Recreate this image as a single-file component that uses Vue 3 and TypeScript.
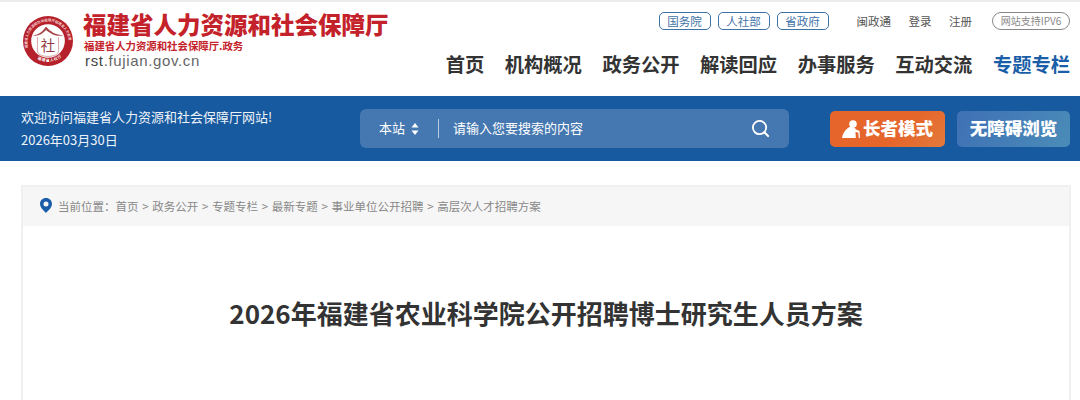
<template>
  <div class="page">
    <header class="head">
      <div class="brand">
        <svg class="logo" viewBox="0 0 52 52" xmlns="http://www.w3.org/2000/svg">
          <defs>
            <path id="ring" d="M 6 35 A 21.5 21.5 0 1 1 46 35" />
            <path id="ringb" d="M 12.5 43 A 22 22 0 0 0 39.5 43" />
          </defs>
          <circle cx="26" cy="26" r="26" fill="#b5202a" />
          <circle cx="26" cy="26" r="17.5" fill="#fff" />
          <text class="ring-text"><textPath href="#ring" startOffset="2">福建省人力资源和社会保障厅福建省人力资源</textPath></text>
          <text class="ring-bottom"><textPath href="#ringb" startOffset="3">福建省人社厅</textPath></text>
          <path d="M10 20 C15 20 19 18 24 11 C28 16 34 20 42 20 C36 22 29 19 24 14.5 C20 19 15 21.5 10 20 Z" fill="#a8454a" />
          <path d="M15 22 V36 C15 40 20 42 26 42 C32 42 37 40 37 36 V22" fill="none" stroke="#c77c7e" stroke-width="0.7" />
          <text class="logo-mark" x="26" y="36" text-anchor="middle">社</text>
        </svg>
        <div class="brand-text">
          <div class="brand-title">福建省人力资源和社会保障厅</div>
          <div class="brand-sub">福建省人力资源和社会保障厅.政务</div>
          <div class="brand-url"><b>rst</b>.fujian.gov.cn</div>
        </div>
      </div>
      <div class="head-right">
        <div class="tools">
          <a v-for="t in govLinks" :key="t" class="pill">{{ t }}</a>
          <div class="user-links">
            <a v-for="t in userLinks" :key="t">{{ t }}</a>
          </div>
          <span class="ipv6">网站支持IPV6</span>
        </div>
        <nav class="nav">
          <a v-for="n in navItems" :key="n" :class="{ on: n === '专题专栏' }">{{ n }}</a>
        </nav>
      </div>
    </header>

    <section class="band">
      <div class="welcome">
        <div>欢迎访问福建省人力资源和社会保障厅网站!</div>
        <div>2026年03月30日</div>
      </div>
      <div class="search">
        <span class="scope">本站</span>
        <svg class="updown" viewBox="0 0 8 12" xmlns="http://www.w3.org/2000/svg">
          <path d="M4 0 L7.5 4.6 H0.5 Z M4 12 L0.5 7.4 H7.5 Z" fill="#fff" />
        </svg>
        <i class="sep"></i>
        <span class="hint">请输入您要搜索的内容</span>
        <svg class="mag" viewBox="0 0 20 20" xmlns="http://www.w3.org/2000/svg">
          <circle cx="9" cy="9" r="7" fill="none" stroke="#fff" stroke-width="1.9" />
          <path d="M14 14 L18 18" stroke="#fff" stroke-width="2.2" stroke-linecap="round" />
        </svg>
      </div>
      <a class="btn elder">
        <svg class="elder-icon" viewBox="0 0 18 18" xmlns="http://www.w3.org/2000/svg">
          <circle cx="11" cy="4" r="3.8" fill="#fff" />
          <path d="M7.5 7 C10 6.5 13 7.5 14 9.5 L17.5 11 L18 18 H16.8 L16.2 12.6 L13.5 12 L13.8 18 H0 C0.5 14 3 9.5 7.5 7 Z" fill="#fff" />
        </svg>
        长者模式
      </a>
      <a class="btn access">无障碍浏览</a>
    </section>

    <main class="card">
      <div class="crumbs">
        <svg class="pin" viewBox="0 0 12 15" xmlns="http://www.w3.org/2000/svg">
          <path fill-rule="evenodd" d="M6 0 C9.4 0 12 2.6 12 5.8 C12 9.4 8.4 12.8 6 15 C3.6 12.8 0 9.4 0 5.8 C0 2.6 2.6 0 6 0 Z M6 3.4 A2.5 2.5 0 1 0 6 8.4 A2.5 2.5 0 1 0 6 3.4 Z" fill="#1a5ea8" />
        </svg>
        <span>当前位置：</span>
        <template v-for="(c, i) in crumbs" :key="c">
          <span>{{ c }}</span>
          <span v-if="i < crumbs.length - 1" class="gt">&gt;</span>
        </template>
      </div>
      <h1 class="title">2026年福建省农业科学院公开招聘博士研究生人员方案</h1>
    </main>
  </div>
</template>

<script setup lang="ts">
const govLinks: string[] = ['国务院', '人社部', '省政府']
const userLinks: string[] = ['闽政通', '登录', '注册']
const navItems: string[] = ['首页', '机构概况', '政务公开', '解读回应', '办事服务', '互动交流', '专题专栏']
const crumbs: string[] = ['首页', '政务公开', '专题专栏', '最新专题', '事业单位公开招聘', '高层次人才招聘方案']
</script>

<style>
html,
body {
  margin: 0;
  background: #fff;
}
</style>

<style scoped>
.page {
  width: 1080px;
  height: 400px;
  overflow: hidden;
  background: #fff;
  font-family: "Noto Sans CJK SC", "Liberation Sans", sans-serif;
  border-top: 2px solid #ececec;
  box-sizing: border-box;
}
a {
  text-decoration: none;
  color: inherit;
}
.head {
  height: 94px;
  display: flex;
  justify-content: space-between;
  padding: 0 10px 0 23px;
}
.brand {
  display: flex;
  align-items: flex-start;
  padding-top: 14px;
}
.logo {
  width: 50px;
  height: 50px;
  flex: none;
}
.ring-text {
  font-size: 3.6px;
  font-weight: 700;
  fill: #f3cfcf;
}
.ring-bottom {
  font-size: 4px;
  font-weight: 700;
  fill: #fff;
  letter-spacing: 0.6px;
}
.logo-mark {
  font-size: 15px;
  fill: #8f3c40;
  font-weight: 400;
}
.brand-text {
  margin-left: 10px;
  margin-top: -4px;
}
.brand-title {
  color: #c4222a;
  font-size: 23.5px;
  line-height: 25px;
  font-weight: 900;
  white-space: nowrap;
}
.brand-sub {
  color: #c4222a;
  font-size: 10.4px;
  line-height: 12px;
  font-weight: 700;
  margin-top: 3px;
  margin-left: 1px;
  white-space: nowrap;
}
.brand-url {
  color: #666;
  font-family: "Liberation Sans", sans-serif;
  font-size: 15px;
  line-height: 17px;
  letter-spacing: 0.65px;
  margin-top: 0;
  margin-left: 2px;
}
.brand-url b {
  color: #444;
  font-weight: 400;
}
.head-right {
  display: flex;
  flex-direction: column;
  align-items: flex-end;
}
.tools {
  display: flex;
  align-items: center;
  margin-top: 10px;
  height: 18px;
}
.pill {
  width: 50px;
  height: 16px;
  border: 1px solid #3f73a8;
  border-radius: 5px;
  margin-right: 7px;
  color: #3f73a8;
  font-size: 11.5px;
  line-height: 16px;
  text-align: center;
}
.user-links {
  display: flex;
  gap: 17.5px;
  margin-left: 21px;
  margin-right: 20px;
  color: #555;
  font-size: 11.5px;
}
.ipv6 {
  width: 76px;
  height: 16px;
  border: 1px solid #888;
  border-radius: 9px;
  color: #888;
  font-size: 10px;
  line-height: 16px;
  text-align: center;
}
.nav {
  display: flex;
  gap: 20.5px;
  margin-top: 21px;
  color: #333;
  font-size: 19.3px;
  line-height: 26px;
  font-weight: 700;
}
.nav .on {
  color: #1a5ea8;
}
.band {
  height: 65px;
  background: #175a9f;
  display: flex;
  align-items: center;
  padding: 0 10px 0 21px;
  color: #fff;
}
.welcome {
  width: 339px;
  font-size: 13px;
  line-height: 23px;
  color: #eef3f9;
  padding-bottom: 2px;
}
.search {
  width: 429px;
  height: 39px;
  box-sizing: border-box;
  padding: 0 19px;
  border-radius: 6px;
  background: #4577b0;
  display: flex;
  align-items: center;
  font-size: 13px;
}
.scope {
  width: 32px;
  margin-top: -2px;
}
.updown {
  width: 8px;
  height: 12px;
}
.sep {
  width: 1px;
  height: 19px;
  background: #b9cde3;
  margin: 0 14px 0 19px;
}
.hint {
  flex: 1;
  margin-top: -2px;
}
.mag {
  width: 19px;
  height: 19px;
}
.btn {
  height: 36px;
  box-sizing: border-box;
  padding-bottom: 2px;
  border-radius: 5px;
  display: flex;
  align-items: center;
  justify-content: center;
  font-size: 17.5px;
  font-weight: 900;
  color: #fff;
}
.elder {
  width: 115px;
  margin-left: 41px;
  background: linear-gradient(135deg, #e5652b 60%, #e47a3c);
}
.elder-icon {
  width: 18px;
  height: 18px;
  margin: 2px 3px 0 0;
}
.access {
  width: 113px;
  margin-left: 12px;
  background: linear-gradient(120deg, #3f70b5, #4a8cb8);
}
.card {
  margin: 24px 9px 0 21px;
  height: 300px;
  border: 2px solid #f0f0f0;
  border-bottom: 0;
}
.crumbs {
  height: 39px;
  box-sizing: border-box;
  padding: 0 0 2px 17px;
  background: #f6f6f6;
  display: flex;
  align-items: center;
  color: #888;
  font-size: 11.5px;
  white-space: nowrap;
}
.pin {
  width: 12px;
  height: 15px;
  margin-right: 6px;
}
.gt {
  margin: 0 3.7px;
}
.title {
  margin: 69px 0 0;
  text-align: center;
  color: #333;
  font-size: 26px;
  line-height: 36px;
  font-weight: 700;
}
</style>
